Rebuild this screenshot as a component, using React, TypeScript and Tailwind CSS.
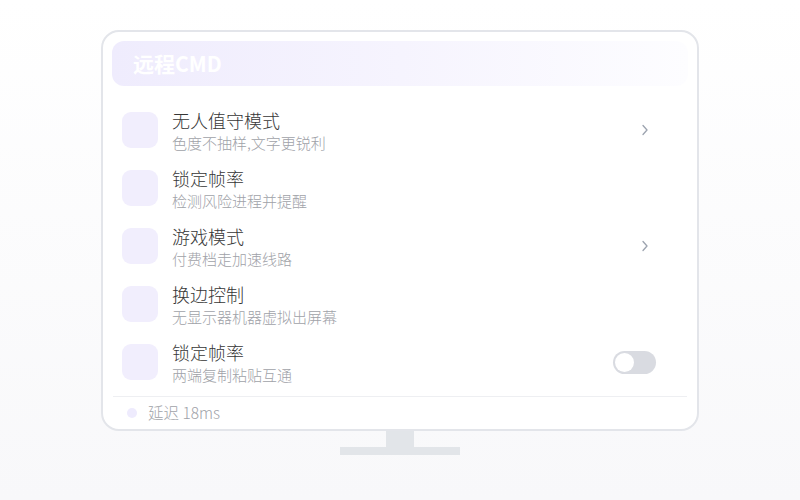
import React from 'react';

type Row = {
  title: string;
  desc: string;
  action?: 'chevron' | 'toggle';
};

const rows: Row[] = [
  { title: '无人值守模式', desc: '色度不抽样,文字更锐利', action: 'chevron' },
  { title: '锁定帧率', desc: '检测风险进程并提醒' },
  { title: '游戏模式', desc: '付费档走加速线路', action: 'chevron' },
  { title: '换边控制', desc: '无显示器机器虚拟出屏幕' },
  { title: '锁定帧率', desc: '两端复制粘贴互通', action: 'toggle' },
];

function Chevron() {
  return (
    <svg width="8" height="12" viewBox="0 0 8 12" className="mr-[7px]">
      <polyline points="2,1.5 6,6 2,10.5" fill="none" stroke="#9ca3af" strokeWidth="1.3" strokeLinecap="round" strokeLinejoin="round" />
    </svg>
  );
}

function Toggle() {
  return (
    <div className="w-[43px] h-[23px] rounded-full bg-[#d9dbe1] p-[2px] flex items-center">
      <div className="w-[19px] h-[19px] rounded-full bg-white" />
    </div>
  );
}

export default function App() {
  return (
    <div className="w-[800px] h-[500px] bg-gradient-to-b from-white to-[#f8f8fa] pt-[30px] font-['Noto_Sans_CJK_SC','Noto_Sans',sans-serif]">
      <div className="w-[598px] h-[401px] ml-[101px] rounded-[18px] border-2 border-[#e3e5ea] bg-white px-[9px] pt-[9px] flex flex-col">
        <div className="h-[45px] rounded-xl bg-gradient-to-r from-[#efecfd] via-[#f6f4fe] to-[#fdfdff] flex items-center pl-[21px]">
          <span className="text-[21px] font-bold text-white leading-none">远程CMD</span>
        </div>

        <div className="mt-[15px] flex flex-col">
          {rows.map((row, i) => (
            <div key={i} className="h-[58px] flex items-center pl-[10px] pr-[32px]">
              <div className="w-9 h-9 rounded-[9px] bg-[#f1eefd]" />
              <div className="ml-[14px] flex-1 flex flex-col font-light pt-[3px]">
                <span className="text-[18px] leading-[21px] text-[#363636]">{row.title}</span>
                <span className="mt-[2px] text-[15px] leading-[20px] text-[#a0a2a8]">{row.desc}</span>
              </div>
              {row.action === 'chevron' && <Chevron />}
              {row.action === 'toggle' && <Toggle />}
            </div>
          ))}
        </div>

        <div className="mt-[5px] mx-[1px] border-t border-[#eeeff2] flex-1 flex items-center pl-[14px] pb-[1px]">
          <div className="w-[10px] h-[10px] rounded-full bg-[#eeebfd]" />
          <span className="ml-[11px] text-[15.5px] font-light text-[#a0a2a8]">延迟 18ms</span>
        </div>
      </div>

      <div className="flex flex-col items-center">
        <div className="w-[28px] h-[16px] bg-[#e2e5e9]" />
        <div className="w-[120px] h-[8px] bg-[#e2e5e9]" />
      </div>
    </div>
  );
}
